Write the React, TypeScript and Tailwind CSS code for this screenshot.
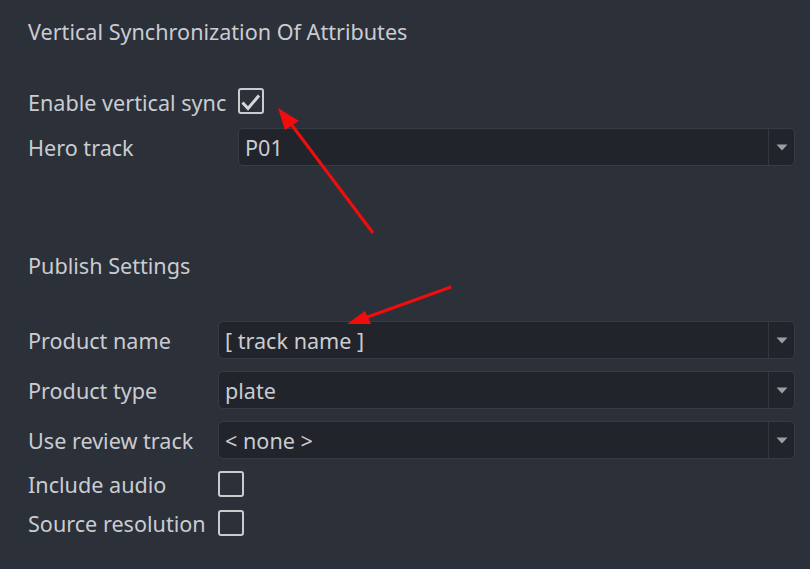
import React from "react";

const font = { fontFamily: '"Noto Sans", "Open Sans", sans-serif' };

function Combo({ value }: { value: string }) {
  return (
    <div className="flex-1 h-full flex rounded-[5px] border border-[#363b45] bg-[#21242b]">
      <div className="flex-1 flex items-center pl-[6px] pt-[2px] text-[#c9ccd1]">{value}</div>
      <div className="w-[26px] border-l border-[#323741] flex items-center justify-center">
        <svg width="12" height="7" viewBox="0 0 12 7">
          <path d="M0.5 0.5 L11.5 0.5 L6 6.5 Z" fill="#9a9ea6" />
        </svg>
      </div>
    </div>
  );
}

function Check({ checked }: { checked?: boolean }) {
  return (
    <div className="w-[26px] h-[26px] rounded-[3px] border-2 border-[#c9cbcf] flex items-center justify-center">
      {checked && (
        <svg width="22" height="22" viewBox="0 0 22 22">
          <path d="M2.5 12.5 L8 18.5 L19 5.5" fill="none" stroke="#d6d8db" strokeWidth="3" />
        </svg>
      )}
    </div>
  );
}

export default function App() {
  return (
    <div className="relative w-[810px] h-[569px] overflow-hidden bg-[#2c3039] text-[#c9ccd1] pl-[28px] pr-[15px] flex flex-col text-[21.6px]" style={font}>
      <div className="mt-[20px] h-[24px] leading-[24px]">Vertical Synchronization Of Attributes</div>

      <div className="mt-[44px] h-[26px] flex items-center">
        <div className="w-[210px] leading-[26px] pt-[3px] whitespace-nowrap">Enable vertical sync</div>
        <Check checked />
      </div>
      <div className="mt-[14px] h-[38px] flex items-center">
        <div className="w-[210px] pt-[2px]">Hero track</div>
        <Combo value="P01" />
      </div>

      <div className="mt-[88px] h-[24px] leading-[24px]">Publish Settings</div>

      <div className="mt-[43px] h-[38px] flex items-center">
        <div className="w-[190px] pt-[2px]">Product name</div>
        <Combo value="[ track name ]" />
      </div>
      <div className="mt-[12px] h-[38px] flex items-center">
        <div className="w-[190px] pt-[2px]">Product type</div>
        <Combo value="plate" />
      </div>
      <div className="mt-[12px] h-[38px] flex items-center">
        <div className="w-[190px] pt-[2px] whitespace-nowrap">Use review track</div>
        <Combo value="< none >" />
      </div>
      <div className="mt-[12px] h-[26px] flex items-center">
        <div className="w-[190px] leading-[26px] pt-[2px]">Include audio</div>
        <Check />
      </div>
      <div className="mt-[13px] h-[26px] flex items-center">
        <div className="w-[190px] leading-[26px] pt-[2px] whitespace-nowrap">Source resolution</div>
        <Check />
      </div>

      <svg className="absolute left-0 top-0 pointer-events-none" width="810" height="569" viewBox="0 0 810 569">
        <line x1="373" y1="233" x2="288" y2="120" stroke="#f20d0d" strokeWidth="3" />
        <polygon points="278,108 285,130 299,121" fill="#f20d0d" />
        <line x1="451" y1="287" x2="362" y2="319" stroke="#f20d0d" strokeWidth="3" />
        <polygon points="347,324 365,311 371,324" fill="#f20d0d" />
      </svg>
    </div>
  );
}
